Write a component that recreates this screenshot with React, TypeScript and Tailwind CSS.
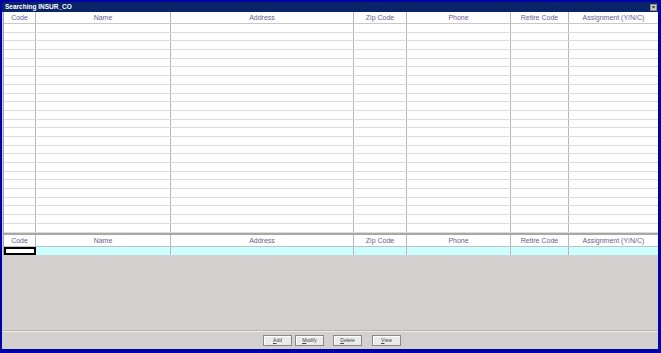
const columns = [
  { label: "Code", w: "w-[32px]" },
  { label: "Name", w: "w-[135px]" },
  { label: "Address", w: "w-[183px]" },
  { label: "Zip Code", w: "w-[53px]" },
  { label: "Phone", w: "w-[104px]" },
  { label: "Retire Code", w: "w-[58px]" },
  { label: "Assignment (Y/N/C)", w: "flex-1" },
];

const rows = Array.from({ length: 24 }, (_, i) => i);

function HeaderRow() {
  return (
    <div className="flex h-[11px] bg-white">
      {columns.map((c) => (
        <div
          key={c.label}
          className={`${c.w} flex items-center justify-center border-r border-[#b8b4c4] text-[7px] leading-none text-[#6e5a92] last:border-r-0`}
        >
          {c.label}
        </div>
      ))}
    </div>
  );
}

function Button({ label, className }: { label: string; className?: string }) {
  return (
    <button
      className={`flex h-[11px] w-[29px] items-center justify-center border border-[#8a8a8a] bg-[#ecebeb] text-[5px] leading-none text-[#444] shadow-[inset_1px_1px_0_#fff] ${className ?? ""}`}
    >
      <span className="underline">{label[0]}</span>
      {label.slice(1)}
    </button>
  );
}

export default function App() {
  return (
    <div className="h-[353px] w-[661px] bg-[#0000a8] p-[2px] pr-[3px] pb-[4px] font-['Liberation_Sans',Arial,sans-serif]">
      <div className="flex h-full flex-col bg-[#d4d0d0]">
        <div className="flex h-[10px] items-center justify-between bg-[#0a246a] pl-[3px] pr-[1px]">
          <span className="text-[6.5px] font-bold leading-none text-white">Searching INSUR_CO</span>
          <span className="flex h-[7px] w-[7px] items-center justify-center border border-[#888] bg-[#d4d0c8] text-[6px] font-bold leading-none text-black">
            ×
          </span>
        </div>
        <div className="ml-[1px] flex flex-col border-l border-[#a0a0d0] bg-white">
          <HeaderRow />
          <div className="border-t border-[#c8c8c8]">
            {rows.map((r) => (
              <div key={r} className="flex h-[8.7px] border-b border-[#dcdcdc]">
                {columns.map((c) => (
                  <div key={c.label} className={`${c.w} border-r border-[#b8b4c4] last:border-r-0`} />
                ))}
              </div>
            ))}
          </div>
          <div className="border-t-2 border-[#a8a8a8]">
            <HeaderRow />
          </div>
          <div className="flex h-[9px] border-t border-[#c0c0c0] bg-[#ccffff]">
            {columns.map((c, i) => (
              <div
                key={c.label}
                className={`${c.w} ${i === 0 ? "border-2 border-black bg-white" : "border-r border-[#b8b4c4] last:border-r-0"}`}
              />
            ))}
          </div>
        </div>
        <div className="flex-1" />
        <div className="flex h-[19px] items-center border-t border-[#b8b4b4] pl-[261px] shadow-[inset_0_1px_0_#eeeaea]">
          <Button label="Add" />
          <Button label="Modify" className="ml-[3px]" />
          <Button label="Delete" className="ml-[9px]" />
          <Button label="View" className="ml-[10px]" />
        </div>
      </div>
    </div>
  );
}
